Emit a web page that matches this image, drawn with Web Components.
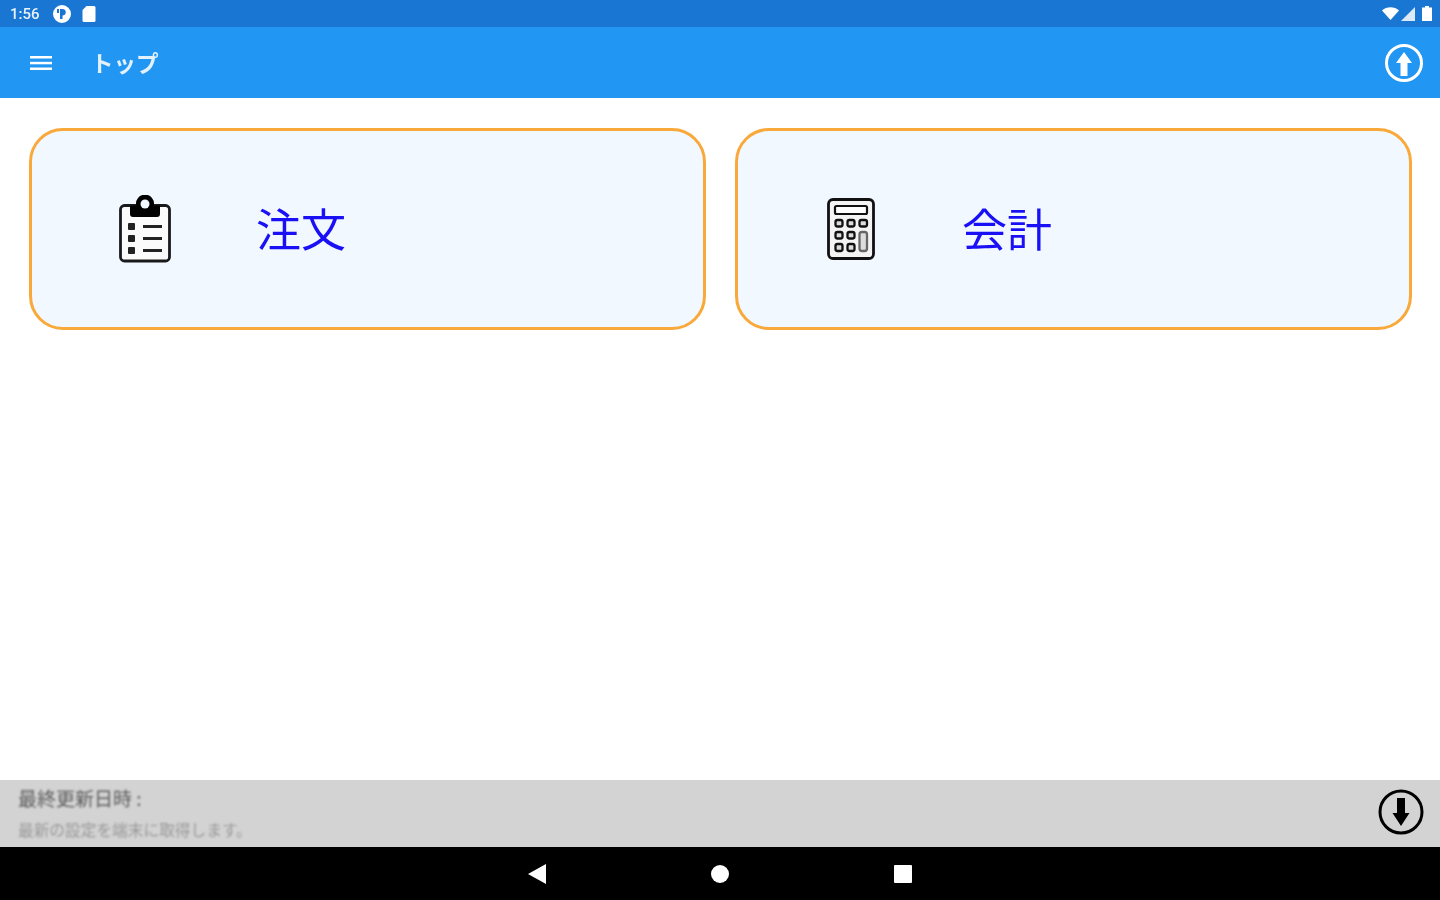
<!DOCTYPE html>
<html lang="ja">
<head>
<meta charset="utf-8">
<title>トップ</title>
<style>
  html, body { margin: 0; height: 100%; overflow: hidden; background: #fff; }
  body { font-family: "Noto Sans CJK JP", "Noto Sans", sans-serif; }
  app-screen { height: 900px; }
</style>
</head>
<body>
<app-screen>
  <status-bar slot="status" time="1:56"></status-bar>
  <app-bar slot="bar" heading="トップ"></app-bar>
  <menu-card label="注文" icon="order"></menu-card>
  <menu-card label="会計" icon="calc"></menu-card>
  <sync-footer slot="footer" updated="最終更新日時 :" note="最新の設定を端末に取得します。"></sync-footer>
  <nav-bar slot="nav"></nav-bar>
</app-screen>

<script>
  class AppScreen extends HTMLElement {
    constructor() {
      super();
      this.attachShadow({ mode: "open" });
      this.shadowRoot.innerHTML = `
        <style>
          :host { display: flex; flex-direction: column; width: 1440px; }
          main {
            flex: 1;
            display: grid;
            grid-template-columns: 1fr 1fr;
            grid-auto-rows: 202px;
            column-gap: 29px;
            padding: 30px 28px 0 29px;
          }
        </style>
        <slot name="status"></slot>
        <slot name="bar"></slot>
        <main><slot></slot></main>
        <slot name="footer"></slot>
        <slot name="nav"></slot>
      `;
    }
  }

  class StatusBar extends HTMLElement {
    constructor() {
      super();
      this.attachShadow({ mode: "open" });
    }

    connectedCallback() {
      this.shadowRoot.innerHTML = `
        <style>
          :host {
            display: flex;
            align-items: center;
            height: 27px;
            padding: 0 8px 0 10px;
            box-sizing: border-box;
            background: #1976d2;
            color: #e8f2fb;
          }
          .time { font: 500 15px/1 "Roboto", sans-serif; margin-top: 2px; width: 31px; filter: blur(.7px); }
          svg { display: block; fill: #fff; filter: blur(.5px); }
          .left { display: flex; align-items: center; gap: 12px; }
          .right { margin-left: auto; display: flex; align-items: center; gap: 3px; }
        </style>
        <div class="left">
          <span class="time">${this.getAttribute("time")}</span>
          <svg width="18" height="18" viewBox="0 0 18 18">
            <path fill-rule="evenodd" d="M9 0a9 9 0 1 1 0 18A9 9 0 0 1 9 0ZM7 4v10h2.500v-3.500H10a3.300 3.300 0 0 0 0-6.500ZM6 4H4v4h2Z"/>
          </svg>
          <svg width="14" height="17" viewBox="0 0 14 17" style="margin-left:-1px">
            <path d="M4.500 1H12a1.500 1.500 0 0 1 1.500 1.500v13A1.500 1.500 0 0 1 12 17H2a1.500 1.500 0 0 1-1.500-1.500V5Z"/>
          </svg>
        </div>
        <div class="right">
          <svg width="17" height="13" viewBox="0 0 17 13"><path d="M0 3.500C4.800-.9 12.200-.9 17 3.500L8.500 13Z"/></svg>
          <svg width="14" height="14" viewBox="0 0 14 14" style="margin-left:-1px"><path d="M14 0v14H0Z" opacity=".85"/></svg>
          <svg width="10" height="15" viewBox="0 0 10 15" style="margin-left:4px"><path d="M3 0h4v1.500h3V15H0V1.500h3Z"/></svg>
        </div>
      `;
    }
  }

  class AppBar extends HTMLElement {
    constructor() {
      super();
      this.attachShadow({ mode: "open" });
    }

    connectedCallback() {
      this.shadowRoot.innerHTML = `
        <style>
          :host {
            display: flex;
            align-items: center;
            height: 71px;
            padding: 0 16px 0 30px;
            background: #2196f3;
            color: #e3f1fd;
            box-sizing: border-box;
          }
          h1 {
            margin: 0 0 0 39px;
            font: 700 22.500px/1 "Noto Sans CJK JP", sans-serif;
            filter: blur(.7px);
          }
          .menu { display: block; filter: blur(.4px); }
          .up { display: block; margin-left: auto; filter: blur(.5px); }
        </style>
        <svg class="menu" width="22" height="16" viewBox="0 0 22 16" fill="#fff">
          <rect y="1" width="22" height="2.500"/>
          <rect y="6.800" width="22" height="2.500"/>
          <rect y="12.500" width="22" height="2.500"/>
        </svg>
        <h1>${this.getAttribute("heading")}</h1>
        <svg class="up" width="40" height="40" viewBox="0 0 40 40">
          <circle cx="20" cy="20" r="17.500" fill="none" stroke="#fff" stroke-width="3"/>
          <path fill="#fff" d="M20 9 28 20h-4.500v13h-7V20H12Z"/>
        </svg>
      `;
    }
  }

  class MenuCard extends HTMLElement {
    static icons = {
      order: `
        <svg width="52" height="68" viewBox="0 0 52 68">
          <rect x="1.500" y="10.500" width="49" height="55.500" rx="4" fill="#fbfbfb" stroke="#1a1a1a" stroke-width="2.800"/>
          <path fill="#000" d="M11 19V10.500h6.200a9 9 0 1 1 17.600 0H41V19a3 3 0 0 1-3 3H14a3 3 0 0 1-3-3Z"/>
          <circle cx="26" cy="9" r="4.500" fill="#f1f8ff"/>
          <rect x="9" y="28" width="7" height="7" rx="1" fill="#222"/>
          <rect x="9" y="40" width="7" height="7" rx="1" fill="#222"/>
          <rect x="9" y="52" width="7" height="7" rx="1" fill="#222"/>
          <rect x="24" y="30" width="19" height="3" fill="#222"/>
          <rect x="24" y="42" width="19" height="3" fill="#222"/>
          <rect x="24" y="54" width="19" height="3" fill="#222"/>
        </svg>`,
      calc: `
        <svg width="48" height="62" viewBox="0 0 48 62" fill="none" stroke="#111">
          <rect x="1.500" y="1.500" width="45" height="59" rx="4.500" stroke-width="2.800" fill="#f4f4f4"/>
          <rect x="8" y="8" width="32" height="8" rx="1.500" stroke-width="2.200" fill="#fff"/>
          <g stroke-width="2.300" fill="#ddd">
            <rect x="8.500" y="22" width="7" height="6.500" rx="2"/>
            <rect x="20.500" y="22" width="7" height="6.500" rx="2"/>
            <rect x="32.500" y="22" width="7.500" height="6.500" rx="2"/>
            <rect x="8.500" y="34" width="7" height="6.500" rx="2"/>
            <rect x="20.500" y="34" width="7" height="6.500" rx="2"/>
            <rect x="8.500" y="46" width="7" height="7" rx="2"/>
            <rect x="20.500" y="46" width="7" height="7" rx="2"/>
            <rect x="32.500" y="34" width="7.500" height="19" rx="2.500" stroke="#666"/>
          </g>
        </svg>`,
    };

    constructor() {
      super();
      this.attachShadow({ mode: "open" });
    }

    connectedCallback() {
      const icon = MenuCard.icons[this.getAttribute("icon")];
      this.shadowRoot.innerHTML = `
        <style>
          :host {
            display: flex;
            align-items: center;
            box-sizing: border-box;
            border: 3px solid #f9a83a;
            border-radius: 34px;
            background: #f1f8ff;
            padding-left: 87px;
            filter: blur(.4px);
          }
          .icon { width: 52px; display: flex; justify-content: center; filter: blur(.3px); }
          svg { display: block; }
          span {
            margin: -3px 0 0 85px;
            font: 400 45px/1 "Noto Sans CJK JP", sans-serif;
            color: #1a10f5;
            filter: blur(.4px);
          }
        </style>
        <div class="icon">${icon}</div>
        <span>${this.getAttribute("label")}</span>
      `;
    }
  }

  class SyncFooter extends HTMLElement {
    constructor() {
      super();
      this.attachShadow({ mode: "open" });
    }

    connectedCallback() {
      this.shadowRoot.innerHTML = `
        <style>
          :host {
            display: flex;
            align-items: center;
            height: 67px;
            padding: 0 15px 0 18px;
            box-sizing: border-box;
            background: #d3d3d3;
          }
          .text { display: flex; flex-direction: column; gap: 12px; }
          .updated { font: 400 19px/1.1 "Noto Sans CJK JP", sans-serif; color: #5c5c5c; filter: blur(.8px); }
          .note { font: 400 15.700px/1.1 "Noto Sans CJK JP", sans-serif; color: #999; filter: blur(.8px); }
          svg { display: block; margin: 0 0 3px auto; filter: blur(.4px); }
        </style>
        <div class="text">
          <div class="updated">${this.getAttribute("updated")}</div>
          <div class="note">${this.getAttribute("note")}</div>
        </div>
        <svg width="48" height="46" viewBox="0 0 48 46">
          <circle cx="24" cy="23" r="21" fill="none" stroke="#000" stroke-width="3"/>
          <path fill="#000" d="M20 9h8v15h4.500L24 37 15.500 24H20Z"/>
        </svg>
      `;
    }
  }

  class NavBar extends HTMLElement {
    constructor() {
      super();
      this.attachShadow({ mode: "open" });
      this.shadowRoot.innerHTML = `
        <style>
          :host {
            display: flex;
            align-items: center;
            justify-content: center;
            gap: 165px;
            height: 53px;
            background: #000;
          }
          svg { display: block; fill: #fff; filter: blur(.4px); }
        </style>
        <svg width="18" height="20" viewBox="0 0 18 20"><path d="M18 0v20L0 10Z"/></svg>
        <svg width="18" height="18" viewBox="0 0 18 18"><circle cx="9" cy="9" r="9"/></svg>
        <svg width="18" height="18" viewBox="0 0 18 18"><rect width="18" height="18" rx="1"/></svg>
      `;
    }
  }

  customElements.define("app-screen", AppScreen);
  customElements.define("status-bar", StatusBar);
  customElements.define("app-bar", AppBar);
  customElements.define("menu-card", MenuCard);
  customElements.define("sync-footer", SyncFooter);
  customElements.define("nav-bar", NavBar);
</script>
</body>
</html>
